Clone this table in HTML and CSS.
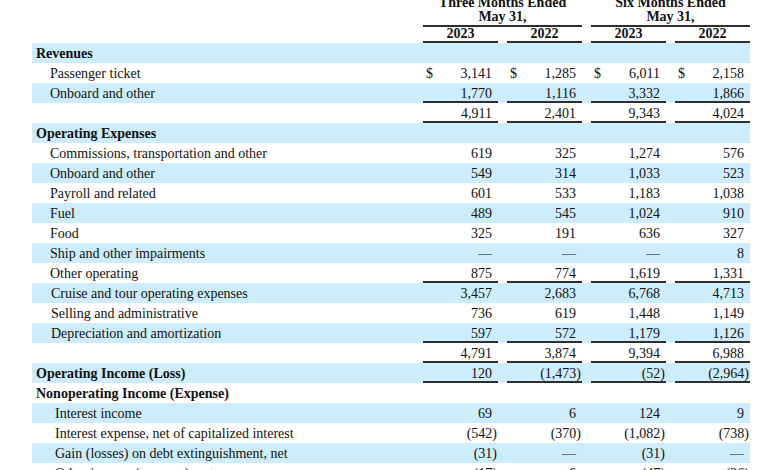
FILE: index.html
```html
<!DOCTYPE html>
<html>
<head>
<meta charset="utf-8">
<link rel="stylesheet" href="styles.css">
</head>
<body>
<table class="fin">
  <colgroup>
    <col class="c-label"><col class="c-num"><col class="c-gap"><col class="c-num"><col class="c-gap"><col class="c-num"><col class="c-gap"><col class="c-num">
  </colgroup>
  <thead>
    <tr class="period">
      <th></th>
      <th colspan="3" class="ph">Three Months Ended<br>May 31,</th>
      <th></th>
      <th colspan="3" class="ph">Six Months Ended<br>May 31,</th>
    </tr>
    <tr class="years">
      <th></th>
      <th class="yh">2023</th><th></th><th class="yh">2022</th><th></th><th class="yh">2023</th><th></th><th class="yh">2022</th>
    </tr>
  </thead>
  <tbody>
    <tr class="blue"><td class="sec">Revenues</td><td></td><td></td><td></td><td></td><td></td><td></td><td></td></tr>
    <tr><td class="ind">Passenger ticket</td><td class="num"><span class="cur">$</span>3,141</td><td></td><td class="num"><span class="cur">$</span>1,285</td><td></td><td class="num"><span class="cur">$</span>6,011</td><td></td><td class="num"><span class="cur">$</span>2,158</td></tr>
    <tr class="blue u"><td class="ind">Onboard and other</td><td class="num">1,770</td><td></td><td class="num">1,116</td><td></td><td class="num">3,332</td><td></td><td class="num">1,866</td></tr>
    <tr class="u"><td></td><td class="num">4,911</td><td></td><td class="num">2,401</td><td></td><td class="num">9,343</td><td></td><td class="num">4,024</td></tr>
    <tr class="blue"><td class="sec">Operating Expenses</td><td></td><td></td><td></td><td></td><td></td><td></td><td></td></tr>
    <tr><td class="ind">Commissions, transportation and other</td><td class="num">619</td><td></td><td class="num">325</td><td></td><td class="num">1,274</td><td></td><td class="num">576</td></tr>
    <tr class="blue"><td class="ind">Onboard and other</td><td class="num">549</td><td></td><td class="num">314</td><td></td><td class="num">1,033</td><td></td><td class="num">523</td></tr>
    <tr><td class="ind">Payroll and related</td><td class="num">601</td><td></td><td class="num">533</td><td></td><td class="num">1,183</td><td></td><td class="num">1,038</td></tr>
    <tr class="blue"><td class="ind">Fuel</td><td class="num">489</td><td></td><td class="num">545</td><td></td><td class="num">1,024</td><td></td><td class="num">910</td></tr>
    <tr><td class="ind">Food</td><td class="num">325</td><td></td><td class="num">191</td><td></td><td class="num">636</td><td></td><td class="num">327</td></tr>
    <tr class="blue"><td class="ind">Ship and other impairments</td><td class="num">—</td><td></td><td class="num">—</td><td></td><td class="num">—</td><td></td><td class="num">8</td></tr>
    <tr class="u"><td class="ind">Other operating</td><td class="num">875</td><td></td><td class="num">774</td><td></td><td class="num">1,619</td><td></td><td class="num">1,331</td></tr>
    <tr class="blue"><td class="ind1">Cruise and tour operating expenses</td><td class="num">3,457</td><td></td><td class="num">2,683</td><td></td><td class="num">6,768</td><td></td><td class="num">4,713</td></tr>
    <tr><td class="ind1">Selling and administrative</td><td class="num">736</td><td></td><td class="num">619</td><td></td><td class="num">1,448</td><td></td><td class="num">1,149</td></tr>
    <tr class="blue u"><td class="ind1">Depreciation and amortization</td><td class="num">597</td><td></td><td class="num">572</td><td></td><td class="num">1,179</td><td></td><td class="num">1,126</td></tr>
    <tr class="u"><td></td><td class="num">4,791</td><td></td><td class="num">3,874</td><td></td><td class="num">9,394</td><td></td><td class="num">6,988</td></tr>
    <tr class="blue u"><td class="sec">Operating Income (Loss)</td><td class="num">120</td><td></td><td class="num"><span class="neg">(1,473)</span></td><td></td><td class="num"><span class="neg">(52)</span></td><td></td><td class="num"><span class="neg">(2,964)</span></td></tr>
    <tr><td class="sec">Nonoperating Income (Expense)</td><td></td><td></td><td></td><td></td><td></td><td></td><td></td></tr>
    <tr class="blue"><td class="ind2">Interest income</td><td class="num">69</td><td></td><td class="num">6</td><td></td><td class="num">124</td><td></td><td class="num">9</td></tr>
    <tr><td class="ind2">Interest expense, net of capitalized interest</td><td class="num"><span class="neg">(542)</span></td><td></td><td class="num"><span class="neg">(370)</span></td><td></td><td class="num"><span class="neg">(1,082)</span></td><td></td><td class="num"><span class="neg">(738)</span></td></tr>
    <tr class="blue"><td class="ind2">Gain (losses) on debt extinguishment, net</td><td class="num"><span class="neg">(31)</span></td><td></td><td class="num">—</td><td></td><td class="num"><span class="neg">(31)</span></td><td></td><td class="num">—</td></tr>
    <tr><td class="ind2">Other income (expense), net</td><td class="num"><span class="neg">(17)</span></td><td></td><td class="num">6</td><td></td><td class="num"><span class="neg">(47)</span></td><td></td><td class="num"><span class="neg">(26)</span></td></tr>
  </tbody>
</table>
</body>
</html>
```

FILE: styles.css
```css
html, body {
  margin: 0;
  padding: 0;
  background: #ffffff;
}

body {
  font-family: "Liberation Serif", "Times New Roman", serif;
  font-size: 14px;
  color: #111111;
  overflow: hidden;
}

.fin {
  table-layout: fixed;
  width: 718px;
  margin: -4px 0 0 32px;
  border-collapse: separate;
  border-spacing: 0;
}

.c-label { width: 391px; }
.c-num { width: 75px; }
.c-gap { width: 9px; }

.fin th {
  font-weight: bold;
  text-align: center;
  padding: 0;
  line-height: 14px;
}

.fin .ph {
  padding-bottom: 3px;
  box-shadow: inset 0 -2px 0 #2e2e2e;
}

.fin .yh {
  padding-bottom: 2px;
  box-shadow: inset 0 -2px 0 #2e2e2e;
}

.fin td {
  padding: 1px 0 0 0;
  line-height: 19px;
  white-space: nowrap;
}

.fin tr.blue {
  background: #cdedfd;
}

.fin td.sec {
  font-weight: bold;
  padding-left: 4px;
}

.fin td.ind { padding-left: 18px; }
.fin td.ind1 { padding-left: 19px; }
.fin td.ind2 { padding-left: 23px; }

.fin td.num {
  text-align: right;
  padding-right: 6px;
}

.fin tr.u td.num {
  box-shadow: inset 0 -2px 0 #2e2e2e;
}

.cur {
  float: left;
  padding-left: 3px;
}

.neg {
  margin-right: -5px;
}
```
